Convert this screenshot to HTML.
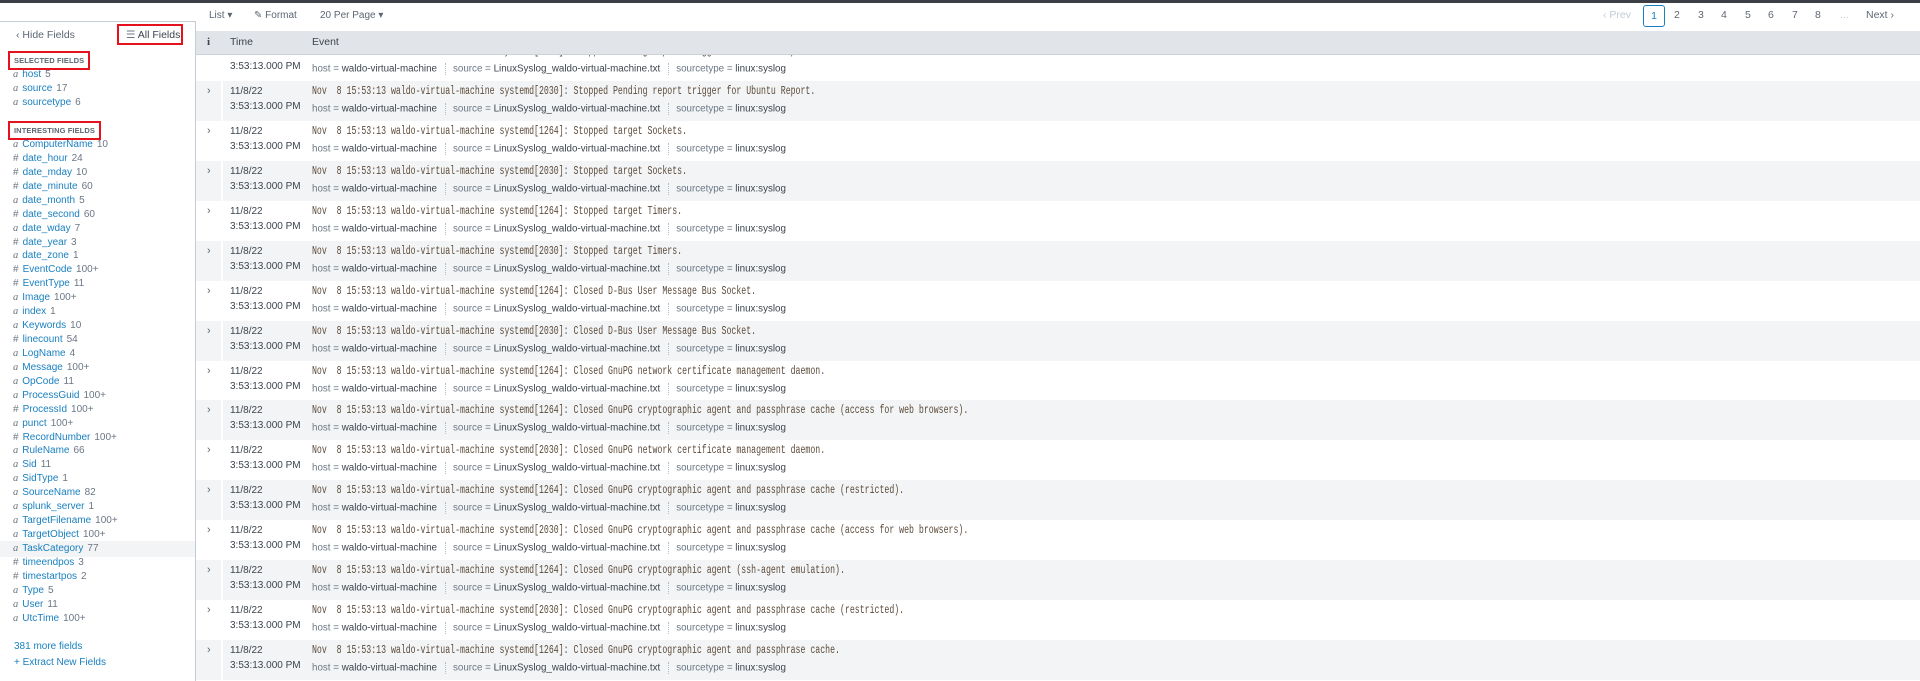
<!DOCTYPE html>
<html><head><meta charset="utf-8"><style>
*{margin:0;padding:0;box-sizing:border-box}
body{width:1920px;height:674px;overflow:hidden;background:#fff;font-family:"Liberation Sans",sans-serif;position:relative;color:#3c444d}
.a{position:absolute;white-space:nowrap}
.top{position:absolute;left:0;top:0;width:1920px;height:3px;background:#3c3f45}
.side{position:absolute;left:0;top:21px;width:196px;height:660px;border-top:1px solid #c3cbd4;border-right:1px solid #c3cbd4}
.f{position:absolute;left:13px;font-size:10px;line-height:14px;color:#1a80c0}
.f i{font-family:"Liberation Serif",serif;color:#6b7785;font-size:10.5px;margin-right:4px}
.f b{font-weight:normal;color:#6b7785;margin-right:4px;font-size:10px}
.f s{text-decoration:none;color:#6b7785;margin-left:4px}
.hd{font-size:7.5px;font-weight:bold;color:#5c6773;letter-spacing:0.1px}
.red{position:absolute;border:2px solid #e3121c}
.row{position:absolute;left:196px;width:1724px;height:40px}
.row.g{background:#f2f4f5}
.row .sep{position:absolute;left:25px;top:0;width:2px;height:100%;background:#fff}
.row .ar{position:absolute;left:11px;top:4px;font-size:11px;color:#5c6773}
.row .d{position:absolute;left:34px;font-size:10px;color:#3c444d}
.row .ev{position:absolute;left:116px;top:4px;font-family:"Liberation Mono",monospace;font-size:11.5px;transform:scaleX(0.715);transform-origin:0 0;color:#5c4a3a;white-space:nowrap}
.row .h{position:absolute;left:116px;top:22px;font-size:9.8px;color:#3c444d;white-space:nowrap}
.h em{font-style:normal;color:#6b7785}
.h u{text-decoration:none;display:inline-block;border-left:1px dotted #b5bcc4;height:12px;vertical-align:middle;margin:0 7px 0 8px}
.pg{position:absolute;top:9px;font-size:10.5px;color:#5c6773}
</style></head><body>
<div class="top"></div>
<div class="side"></div>
<div class="a" style="left:16px;top:29px;font-size:10.5px;color:#5c6773">‹ Hide Fields</div>
<div class="a" style="left:126px;top:29px;font-size:10.5px;color:#3c444d"><span style="color:#6b7785">☰</span> All Fields</div>
<div class="red" style="left:117px;top:24px;width:66px;height:21px"></div>
<div class="a hd" style="left:14px;top:56px">SELECTED FIELDS</div>
<div class="red" style="left:8px;top:51px;width:82px;height:19px"></div>
<div class="a hd" style="left:14px;top:126px">INTERESTING FIELDS</div>
<div class="red" style="left:8px;top:121px;width:93px;height:19px"></div>
<div class="f" style="top:68px"><i>a</i>host<s>5</s></div>
<div class="f" style="top:82px"><i>a</i>source<s>17</s></div>
<div class="f" style="top:96px"><i>a</i>sourcetype<s>6</s></div>
<div style="position:absolute;left:0;top:541px;width:195px;height:16px;background:#f2f4f5"></div>
<div id="fl"></div>
<div class="a" style="left:14px;top:641px;font-size:10px;color:#1a80c0">381 more fields</div>
<div class="a" style="left:14px;top:657px;font-size:10px;color:#1a80c0">+ Extract New Fields</div>

<div class="a" style="left:209px;top:10px;font-size:10px;color:#5c6773">List ▾</div>
<div class="a" style="left:254px;top:10px;font-size:10px;color:#5c6773">✎ Format</div>
<div class="a" style="left:320px;top:10px;font-size:10px;color:#5c6773">20 Per Page ▾</div>

<div class="pg" style="left:1603px;color:#c3cbd4">‹ Prev</div>
<div style="position:absolute;left:1643px;top:5px;width:22px;height:22px;border:1px solid #1a80c0;border-radius:3px;font-size:10.5px;color:#1a80c0;text-align:center;line-height:20px">1</div>
<div class="pg" style="left:1674px">2</div><div class="pg" style="left:1698px">3</div><div class="pg" style="left:1721px">4</div><div class="pg" style="left:1745px">5</div><div class="pg" style="left:1768px">6</div><div class="pg" style="left:1792px">7</div><div class="pg" style="left:1815px">8</div><div class="pg" style="left:1840px;color:#c3cbd4">...</div>
<div class="pg" style="left:1866px">Next ›</div>

<div style="position:absolute;left:196px;top:31px;width:1724px;height:24px;background:#e1e4e8;border-bottom:1px solid #cdd2d8"></div>
<div class="a" style="left:207px;top:36px;font-family:'Liberation Serif',serif;font-weight:bold;font-size:11px;color:#3c444d">i</div>
<div class="a" style="left:230px;top:36px;font-size:10.5px;color:#3c444d">Time</div>
<div class="a" style="left:312px;top:36px;font-size:10.5px;color:#3c444d">Event</div>
<div id="rows"></div>
<script>
var F=[["a","ComputerName","10"],["#","date_hour","24"],["#","date_mday","10"],["#","date_minute","60"],["a","date_month","5"],["#","date_second","60"],["a","date_wday","7"],["#","date_year","3"],["a","date_zone","1"],["#","EventCode","100+"],["#","EventType","11"],["a","Image","100+"],["a","index","1"],["a","Keywords","10"],["#","linecount","54"],["a","LogName","4"],["a","Message","100+"],["a","OpCode","11"],["a","ProcessGuid","100+"],["#","ProcessId","100+"],["a","punct","100+"],["#","RecordNumber","100+"],["a","RuleName","66"],["a","Sid","11"],["a","SidType","1"],["a","SourceName","82"],["a","splunk_server","1"],["a","TargetFilename","100+"],["a","TargetObject","100+"],["a","TaskCategory","77"],["#","timeendpos","3"],["#","timestartpos","2"],["a","Type","5"],["a","User","11"],["a","UtcTime","100+"]];
var h="";F.forEach(function(f,k){h+='<div class="f" style="top:'+(138+k*13.93)+'px">'+(f[0]=="a"?'<i>a</i>':'<b>#</b>')+f[1]+'<s>'+f[2]+'</s></div>'});
document.getElementById("fl").innerHTML=h;
var E=["[1264]: Stopped Pending report trigger for Ubuntu Report.","[2030]: Stopped Pending report trigger for Ubuntu Report.","[1264]: Stopped target Sockets.","[2030]: Stopped target Sockets.","[1264]: Stopped target Timers.","[2030]: Stopped target Timers.","[1264]: Closed D-Bus User Message Bus Socket.","[2030]: Closed D-Bus User Message Bus Socket.","[1264]: Closed GnuPG network certificate management daemon.","[1264]: Closed GnuPG cryptographic agent and passphrase cache (access for web browsers).","[2030]: Closed GnuPG network certificate management daemon.","[1264]: Closed GnuPG cryptographic agent and passphrase cache (restricted).","[2030]: Closed GnuPG cryptographic agent and passphrase cache (access for web browsers).","[1264]: Closed GnuPG cryptographic agent (ssh-agent emulation).","[2030]: Closed GnuPG cryptographic agent and passphrase cache (restricted).","[1264]: Closed GnuPG cryptographic agent and passphrase cache."];
var r="";E.forEach(function(e,k){var t=81+(k-1)*39.93;if(k==0)t=55-14;
r+='<div class="row'+(k%2?' g':'')+'" style="top:'+t+'px;'+(k==0?'clip-path:inset(14px 0 0 0)':'')+'"><div class="sep"></div><div class="ar">›</div><div class="d" style="top:5px">11/8/22</div><div class="d" style="top:20px">3:53:13.000 PM</div><div class="ev">Nov&nbsp; 8 15:53:13 waldo-virtual-machine systemd'+e+'</div><div class="h"><em>host =</em> waldo-virtual-machine<u></u><em>source =</em> LinuxSyslog_waldo-virtual-machine.txt<u></u><em>sourcetype =</em> linux:syslog</div></div>'});
document.getElementById("rows").innerHTML=r;
</script>
</body></html>
